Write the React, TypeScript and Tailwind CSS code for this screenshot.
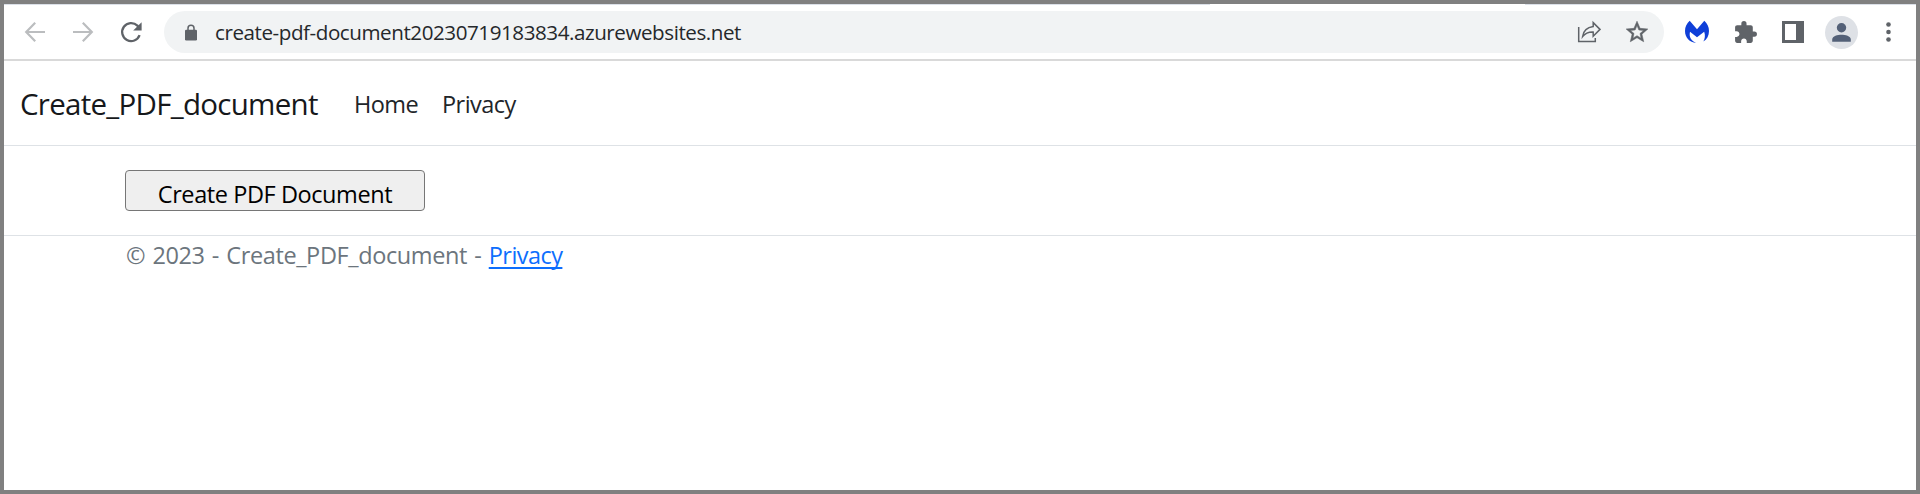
function BackIcon() {
  return (
    <svg className="h-6 w-6" viewBox="0 0 24 24" fill="none" stroke="#bbbdbf" strokeWidth="2.2">
      <path d="M22 12H3.6M12.2 2.8 3.2 12l9 9.2" />
    </svg>
  );
}

function ForwardIcon() {
  return (
    <svg className="h-6 w-6" viewBox="0 0 24 24" fill="none" stroke="#bbbdbf" strokeWidth="2.2">
      <path d="M2 12h18.4M11.8 2.8l9 9.2-9 9.2" />
    </svg>
  );
}

function ReloadIcon() {
  return (
    <svg className="h-6 w-6" viewBox="0 0 24 24">
      <path d="M20.6 15.2A9 9 0 1 1 18.4 5.6L19.4 7" fill="none" stroke="#5f6368" strokeWidth="2.3" />
      <path d="M22.6 2.2v8.4h-8.4z" fill="#5f6368" />
    </svg>
  );
}

function LockIcon() {
  return (
    <svg className="h-[17px] w-3" viewBox="0 0 12 17">
      <path d="M3 7V4.2a3 3 0 0 1 6 0V7" fill="none" stroke="#5f6368" strokeWidth="1.5" />
      <rect y="5.8" width="12" height="10.8" rx="1.3" fill="#5f6368" />
    </svg>
  );
}

function ShareIcon() {
  return (
    <svg className="h-6 w-6" viewBox="0 0 24 24" fill="none" stroke="#5f6368" strokeWidth="1.5">
      <path d="M1.7 7v14.6h16.6V18" />
      <path d="M16.2 2.6 23 9.4l-6.8 6.8v-4.1C11 11.9 8.3 13.2 5.6 16.6 6.4 10.8 9.7 7.5 16.2 6.6z" />
    </svg>
  );
}

function StarIcon() {
  return (
    <svg className="h-[26px] w-[26px]" viewBox="0 0 24 24" fill="#5f6368" stroke="#5f6368" strokeWidth="0.5">
      <path
        fillRule="evenodd"
        d="m22 9.24-7.19-.62L12 2 9.19 8.63 2 9.24l5.46 4.73L5.82 21 12 17.27 18.18 21l-1.63-7.03zM12 15.4l-3.76 2.27 1-4.28-3.32-2.88 4.38-.38L12 6.1l1.71 4.04 4.38.38-3.32 2.88 1 4.28z"
      />
    </svg>
  );
}

function MalwarebytesIcon() {
  return (
    <svg className="h-6 w-6" viewBox="0 0 24 24" fill="#0f3fd8">
      <path d="M4.7.8 12 9.3 19.3.8C22.4 3.7 24 7 24 11c0 4.7-2 8.3-5.7 10.6 1.6-2.7 2.2-6.1.9-9.9L12 17.2 5 11.7C3.8 17 6 20.8 11.2 22.7 4.6 22.6 0 17.6 0 11 0 7 1.6 3.7 4.7.8z" />
    </svg>
  );
}

function PuzzleIcon() {
  return (
    <svg className="h-[25px] w-[25px]" viewBox="0 0 24 24" fill="#5f6368">
      <path d="M20.5 11H19V7c0-1.1-.9-2-2-2h-4V3.5a2.5 2.5 0 0 0-5 0V5H4c-1.1 0-1.99.9-1.99 2v3.8H3.5c1.49 0 2.7 1.21 2.7 2.7s-1.21 2.7-2.7 2.7H2V20c0 1.1.9 2 2 2h3.8v-1.5c0-1.49 1.21-2.7 2.7-2.7s2.7 1.21 2.7 2.7V22H17c1.1 0 2-.9 2-2v-4h1.5a2.5 2.5 0 0 0 0-5z" />
    </svg>
  );
}

function SidePanelIcon() {
  return (
    <svg className="h-[22px] w-[22px]" viewBox="0 0 22 22">
      <path d="M0 0h22v22H0zM3 3v16h11V3z" fill="#5f6368" fillRule="evenodd" />
    </svg>
  );
}

function AvatarIcon() {
  return (
    <svg className="h-[33px] w-[33px]" viewBox="0 0 33 33">
      <circle cx="16.5" cy="16.5" r="16.5" fill="#dee1e6" />
      <circle cx="16.5" cy="11.7" r="4.7" fill="#536077" />
      <path d="M7.2 25.7v-2.2c0-3.3 5.6-4.7 9.3-4.7s9.3 1.4 9.3 4.7v2.2z" fill="#536077" />
    </svg>
  );
}

function MenuIcon() {
  return (
    <svg className="h-5 w-[5px]" viewBox="0 0 5 20" fill="#5f6368">
      <circle cx="2.5" cy="2.5" r="2.3" />
      <circle cx="2.5" cy="10" r="2.3" />
      <circle cx="2.5" cy="17.5" r="2.3" />
    </svg>
  );
}

function BrowserBar() {
  return (
    <div className="flex h-[57px] flex-col border-b-2 border-[#d9d9d9]">
      <div className="flex h-px shrink-0 justify-between">
        <div className="w-[1206px] bg-[#dbe0e8]" />
        <div className="w-[391px] bg-[#dbe0e8]" />
      </div>
      <div className="flex items-center pt-[6px]">
        <div className="ml-[19px] flex w-[141px] items-center gap-6">
          <BackIcon />
          <ForwardIcon />
          <ReloadIcon />
        </div>
        <div className="flex h-[42px] w-[1500px] items-center rounded-full bg-[#f1f3f4] pr-[14px] pl-[21px]">
          <LockIcon />
          <span className="ml-[18px] text-[20.6px] tracking-[-0.44px] whitespace-nowrap text-[#25282b]">
            create-pdf-document20230719183834.azurewebsites.net
          </span>
          <div className="ml-auto flex items-center gap-[23px]">
            <ShareIcon />
            <StarIcon />
          </div>
        </div>
        <div className="ml-[21px] flex items-center">
          <MalwarebytesIcon />
          <div className="ml-6">
            <PuzzleIcon />
          </div>
          <div className="ml-6">
            <SidePanelIcon />
          </div>
          <div className="ml-[21px]">
            <AvatarIcon />
          </div>
          <div className="ml-[28px]">
            <MenuIcon />
          </div>
        </div>
      </div>
    </div>
  );
}

export default function App() {
  return (
    <div className="h-[494px] w-[1920px] overflow-hidden border-4 border-[#808080] bg-white font-['Open_Sans',sans-serif] text-[23.5px] text-[#212529]">
      <BrowserBar />
      <header className="flex h-[85px] items-center border-b border-[#dee2e6] pl-4">
        <a className="w-[334px] pt-[3px] text-[29.5px] tracking-[-0.72px] whitespace-nowrap text-[#16181b]">Create_PDF_document</a>
        <nav className="flex pt-[3px]">
          <a className="w-[88px] tracking-[-0.6px]">Home</a>
          <a className="tracking-[-0.55px]">Privacy</a>
        </nav>
      </header>
      <main className="flex h-[90px] items-start border-b border-[#dee2e6] pt-6 pl-[121px]">
        <button className="flex h-[41px] w-[300px] items-center justify-center rounded-[4px] border border-[#767676] bg-[#efefef] pt-[6px] leading-[34px] tracking-[-0.42px] whitespace-nowrap text-black">
          Create PDF Document
        </button>
      </main>
      <footer className="pt-px pl-[122px] leading-9 whitespace-pre text-[#6c757d]">
        <span className="tracking-[-0.38px] [word-spacing:1.5px]">{"© 2023 - Create_PDF_document - "}</span>
        <a className="tracking-[-0.55px] text-[#0d6efd] underline decoration-2 underline-offset-[3px] [text-decoration-skip-ink:none]">Privacy</a>
      </footer>
    </div>
  );
}
